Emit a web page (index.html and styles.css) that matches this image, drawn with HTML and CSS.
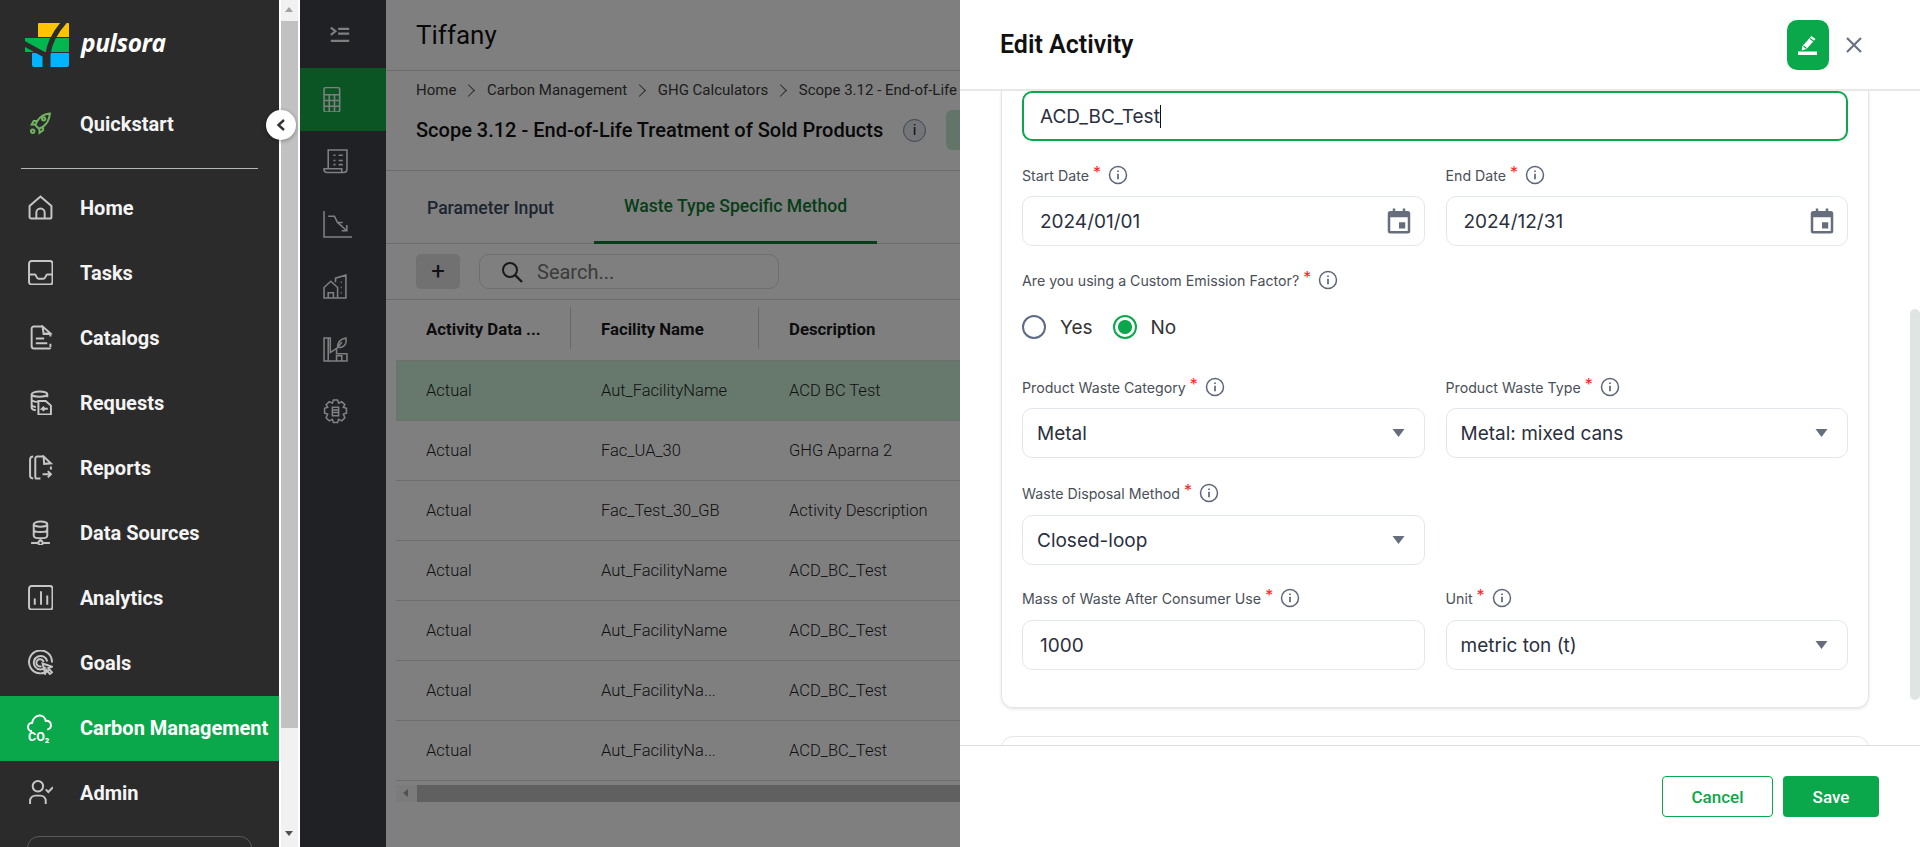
FILE: index.html
```html
<!DOCTYPE html>
<html lang="en">
<head>
    <meta charset="UTF-8">
    <title>Edit Activity - Pulsora</title>
    <link rel="stylesheet" href="styles.css">
</head>
<body>
    <svg class="sprite" width="0" height="0">
        <symbol id="i-info" viewBox="0 0 20 20">
            <circle cx="10" cy="10" r="8.500" fill="none" stroke="currentColor" stroke-width="1.500"/>
            <path d="M10 8.800v5.400M10 5.400v1.600" fill="none" stroke="currentColor" stroke-width="1.700"/>
        </symbol>
        <symbol id="i-cal" viewBox="0 0 24 24">
            <path fill="currentColor" d="M7 2h2v2h6V2h2v2h2a2 2 0 0 1 2 2v14a2 2 0 0 1-2 2H5a2 2 0 0 1-2-2V6a2 2 0 0 1 2-2h2V2zM5 9v11h14V9H5zm7 4h5v5h-5v-5z"/>
        </symbol>
        <symbol id="i-caret" viewBox="0 0 12 8">
            <path fill="currentColor" d="M0 0h12L6 8z"/>
        </symbol>
    </svg>

    <aside class="side-frame">
        <nav class="side-nav">
            <div class="brand">
                <svg class="brand-mark" width="46" height="46" viewBox="0 0 46 46">
                    <path fill="#ffc400" d="M15 1h29a1 1 0 0 1 1 1v13H14V2a1 1 0 0 1 1-1z"/>
                    <path fill="#00b64f" d="M1 16h44v14H1z"/>
                    <path fill="#00b4ff" d="M8 31h37v12a2 2 0 0 1-2 2H10a2 2 0 0 1-2-2z"/>
                    <path fill="none" stroke="#2b2b2b" stroke-width="5" d="M-1 21l22 12v13M41 -1C33 8 25 19 24 33v13"/>
                </svg>
                <span class="brand-name">pulsora</span>
            </div>
            <a class="nav-item">
                <svg class="nav-icon rocket" viewBox="0 0 24 24"><path d="M21 2.500c-5 .5-9 2.500-12 7l-2 4 3.500 3.500 4-2c4-3 6-7 6.500-12.500zM9 9.500H5.500L3.500 13h3.500M14.500 15v3.500L11 21v-4"/><circle cx="15" cy="7.500" r="1.600"/><circle cx="4.500" cy="19.500" r="1.700"/></svg>
                Quickstart
            </a>
            <div class="nav-rule"></div>
            <a class="nav-item">
                <svg class="nav-icon" viewBox="0 0 24 24"><path d="M1.500 21V10.500L12 1.500l10.500 9V21a1.500 1.500 0 0 1-1.500 1.500H3A1.500 1.500 0 0 1 1.500 21zM8 22v-5a4 4 0 0 1 8 0v5"/></svg>
                Home
            </a>
            <a class="nav-item">
                <svg class="nav-icon" viewBox="0 0 24 24"><rect x="1" y="1" width="22.500" height="22.500" rx="2.500"/><path d="M1 14h5.500c1.500 0 1.500 4 3.500 4h5c2 0 2-4 3.500-4h5.500"/></svg>
                Tasks
            </a>
            <a class="nav-item">
                <svg class="nav-icon" viewBox="0 0 24 24"><path d="M14 1.500H5.500a2 2 0 0 0-2 2v17a2 2 0 0 0 2 2h15a1 1 0 0 0 1-1M14 1.500l7.500 6.500-6.500.5zM21.500 8v3M21.500 18v3M7.500 13h8M7.500 17.500h11"/></svg>
                Catalogs
            </a>
            <a class="nav-item">
                <svg class="nav-icon" viewBox="0 0 24 24"><ellipse cx="11" cy="4" rx="7.500" ry="2.500"/><path d="M3.500 4v13c0 1 1.500 2 4 2.500M18.500 4v3M3.500 9c0 1 2 2 5.500 2.400M3.500 14c0 1 1.500 2 4 2.400M10 10.500h7l5 4.500v8.500H10zM19 18h-5.500l2-2M13.500 18l2 2"/></svg>
                Requests
            </a>
            <a class="nav-item">
                <svg class="nav-icon" viewBox="0 0 24 24"><path d="M5 1.500C3 1.500 2 2.500 2 4v16c0 1.500 1 2.500 3 2.500M15 1.500H9a2 2 0 0 0-2 2V21a1.500 1.500 0 0 0 1.500 1.500H12M15 1.500l7 6.500-6.500.5zM22 11v3M14 18.500h8M19 15.500l3 3-3 3"/></svg>
                Reports
            </a>
            <a class="nav-item">
                <svg class="nav-icon" viewBox="0 0 24 24"><ellipse cx="12" cy="4" rx="6.500" ry="2.500"/><path d="M5.500 4v11c0 1.500 3 2.500 6.500 2.500s6.500-1 6.500-2.500V4M5.500 9c0 1.500 3 2.500 6.500 2.500s6.500-1 6.500-2.500M12 17.500v2.500M3 22h6.500M14.500 22H21"/><circle cx="12" cy="22" r="2"/></svg>
                Data Sources
            </a>
            <a class="nav-item">
                <svg class="nav-icon" viewBox="0 0 24 24"><rect x="1" y="1" width="22.500" height="22.500" rx="2.500"/><path d="M6.500 13v6M12.500 6v13M18.500 10v9"/></svg>
                Analytics
            </a>
            <a class="nav-item">
                <svg class="nav-icon" viewBox="0 0 24 24"><path d="M20 19A11 11 0 1 1 23 12M17 16.500A6.500 6.500 0 1 1 18.500 11M13 15.500A3.500 3.500 0 1 1 15 11.500"/><path d="M14 13l9 3-3.500 1.500 3.500 4-2 1.500-3.500-4-1 3.500z"/></svg>
                Goals
            </a>
            <a class="nav-item active">
                <svg class="nav-icon" viewBox="0 0 24 24"><path d="M4 15.500a4 4 0 0 1 0-8A8 8 0 0 1 11 .5a6 6 0 0 1 6 5 4.200 4.200 0 0 1 5 4 4 4 0 0 1-3.500 4.500"/><text class="co2" x="0" y="24.500">CO₂</text></svg>
                Carbon Management
            </a>
            <a class="nav-item">
                <svg class="nav-icon" viewBox="0 0 24 24"><circle cx="9.500" cy="6" r="5"/><path d="M2 23v-3a5 5 0 0 1 5-5h5a5 5 0 0 1 5 5v3M17 9l2.500 2.500L24 7"/></svg>
                Admin
            </a>
            <div class="nav-box"></div>
        </nav>
        <div class="side-scroll">
            <span class="arrow arrow-up"></span>
            <span class="side-thumb"></span>
            <span class="arrow arrow-down"></span>
        </div>
        <button class="collapse-btn">
            <svg width="12" height="14" viewBox="0 0 12 14"><path d="M9 2L3.500 7 9 12" fill="none" stroke="#333" stroke-width="2.400"/></svg>
        </button>
    </aside>

    <section class="workspace">
        <div class="rail">
            <div class="rail-top">
                <svg class="rail-icon" viewBox="0 0 24 24"><path d="M2 5l5 4-5 4M10 6.500h12M10 11.500h12M2 19.500h20"/></svg>
            </div>
            <div class="rail-item active">
                <svg class="rail-icon" viewBox="0 0 24 24"><rect x="1" y="0.500" width="15" height="23.500" rx="2"/><path d="M1 7.500h15M1 13h15M1 18.500h15M6 7.500V24M11 7.500V24"/></svg>
            </div>
            <div class="rail-item">
                <svg class="rail-icon" viewBox="0 0 24 24"><path d="M5 19V1h18v18.500a3 3 0 0 1-3 3H4a3 3 0 0 1-3-2.500v-1h17v3M10 6h2M15 6h4M10 11h2M15 11h4M10 15h2M15 15h4"/></svg>
            </div>
            <div class="rail-item">
                <svg class="rail-icon tall" viewBox="0 0 28 28"><path d="M1 1v25h27M5 6h6l3 6h5M14 12l9 8M23 14.500V20h-5"/></svg>
            </div>
            <div class="rail-item">
                <svg class="rail-icon" viewBox="0 0 24 24"><path d="M1 23V13l6.500-6 6.500 6v10zM5 23v-5h5v5M12 8V4l10-3v22h-8M17 8h1M17 13h1M17 18h1"/></svg>
            </div>
            <div class="rail-item">
                <svg class="rail-icon" viewBox="0 0 24 24"><path d="M1 1h6v14l6-4v5h10v7H1zM5 23V1M13 23v-5h5v5M14 10c0-5 3-8 8-9 1 5-1 9-6 9zM14 10l4-5"/></svg>
            </div>
            <div class="rail-item">
                <svg class="rail-icon" viewBox="0 0 24 24"><path d="M10 1h4l1 3 3-1.500 3 3L19.500 8l3 1v4.500l-3 1L21 18l-3 3-3-1.500-1 3h-4l-1-3L6 21l-3-3 1.500-3.500-3-1V9l3-1L3 5.500l3-3L9 4z"/><path d="M9 8h6v8H9zM9 10.500h6M9 13h6"/></svg>
            </div>
        </div>

        <div class="main">
            <header class="top-bar">Tiffany</header>
            <div class="page-head">
                <div class="crumbs">
                    <span>Home</span><i class="crumb-sep"></i>
                    <span>Carbon Management</span><i class="crumb-sep"></i>
                    <span>GHG Calculators</span><i class="crumb-sep"></i>
                    <span>Scope 3.12 - End-of-Life Treatment of Sold Products</span>
                </div>
                <div class="page-title">
                    <h2>Scope 3.12 - End-of-Life Treatment of Sold Products</h2>
                    <span class="title-info">i</span>
                    <span class="title-action"></span>
                </div>
            </div>
            <div class="tabs">
                <div class="tab">Parameter Input</div>
                <div class="tab active">Waste Type Specific Method</div>
            </div>
            <div class="toolbar">
                <button class="add-btn">+</button>
                <div class="search-box">
                    <svg width="24" height="24" viewBox="0 0 24 24"><circle cx="10" cy="10" r="7" fill="none" stroke="#333" stroke-width="2"/><path d="M15 15l7 7" stroke="#333" stroke-width="2.400"/></svg>
                    <span>Search...</span>
                </div>
            </div>
            <div class="grid">
                <div class="grid-row grid-head">
                    <div class="cell">Activity Data ...</div>
                    <div class="cell">Facility Name</div>
                    <div class="cell">Description</div>
                </div>
                <div class="grid-row picked">
                    <div class="cell">Actual</div><div class="cell">Aut_FacilityName</div><div class="cell">ACD BC Test</div>
                </div>
                <div class="grid-row">
                    <div class="cell">Actual</div><div class="cell">Fac_UA_30</div><div class="cell">GHG Aparna 2</div>
                </div>
                <div class="grid-row">
                    <div class="cell">Actual</div><div class="cell">Fac_Test_30_GB</div><div class="cell">Activity Description</div>
                </div>
                <div class="grid-row">
                    <div class="cell">Actual</div><div class="cell">Aut_FacilityName</div><div class="cell">ACD_BC_Test</div>
                </div>
                <div class="grid-row">
                    <div class="cell">Actual</div><div class="cell">Aut_FacilityName</div><div class="cell">ACD_BC_Test</div>
                </div>
                <div class="grid-row">
                    <div class="cell">Actual</div><div class="cell">Aut_FacilityNa...</div><div class="cell">ACD_BC_Test</div>
                </div>
                <div class="grid-row">
                    <div class="cell">Actual</div><div class="cell">Aut_FacilityNa...</div><div class="cell">ACD_BC_Test</div>
                </div>
                <div class="grid-scroll">
                    <span class="arrow arrow-left"></span>
                    <span class="grid-thumb"></span>
                </div>
            </div>
        </div>
        <div class="backdrop"></div>
    </section>

    <section class="drawer">
        <header class="drawer-head">
            <h1>Edit Activity</h1>
            <button class="edit-btn">
                <svg width="20" height="20" viewBox="0 0 20 20"><path fill="#fff" d="M0 16.500h19V20H0zM13.500 1l4 3-9 10-5 1.500L4.500 11z"/><path stroke="#0aa84a" stroke-width="1.200" d="M12 3.500l4 3M5.500 11l3 2.500"/></svg>
            </button>
            <button class="close-btn">
                <svg width="18" height="18" viewBox="0 0 18 18"><path d="M2 2l14 14M16 2L2 16" stroke="#687083" stroke-width="2.200"/></svg>
            </button>
        </header>

        <div class="drawer-body">
            <div class="form-card">
                <div class="field-input focused"><span>ACD_BC_Test</span><i class="caret"></i></div>

                <div class="form-row">
                    <div class="field">
                        <label>Start Date<sup>*</sup><svg class="info"><use href="#i-info"/></svg></label>
                        <div class="field-input">2024/01/01<svg class="cal"><use href="#i-cal"/></svg></div>
                    </div>
                    <div class="field">
                        <label>End Date<sup>*</sup><svg class="info"><use href="#i-info"/></svg></label>
                        <div class="field-input">2024/12/31<svg class="cal"><use href="#i-cal"/></svg></div>
                    </div>
                </div>

                <div class="form-row">
                    <div class="field wide">
                        <label>Are you using a Custom Emission Factor?<sup>*</sup><svg class="info"><use href="#i-info"/></svg></label>
                        <div class="radios">
                            <span class="radio"></span><span class="radio-text">Yes</span>
                            <span class="radio on"></span><span class="radio-text">No</span>
                        </div>
                    </div>
                </div>

                <div class="form-row">
                    <div class="field">
                        <label>Product Waste Category<sup>*</sup><svg class="info"><use href="#i-info"/></svg></label>
                        <div class="field-input select">Metal<svg class="drop"><use href="#i-caret"/></svg></div>
                    </div>
                    <div class="field">
                        <label>Product Waste Type<sup>*</sup><svg class="info"><use href="#i-info"/></svg></label>
                        <div class="field-input select">Metal: mixed cans<svg class="drop"><use href="#i-caret"/></svg></div>
                    </div>
                </div>

                <div class="form-row lower">
                    <div class="field">
                        <label>Waste Disposal Method<sup>*</sup><svg class="info"><use href="#i-info"/></svg></label>
                        <div class="field-input select">Closed-loop<svg class="drop"><use href="#i-caret"/></svg></div>
                    </div>
                </div>

                <div class="form-row lower last">
                    <div class="field">
                        <label>Mass of Waste After Consumer Use<sup>*</sup><svg class="info"><use href="#i-info"/></svg></label>
                        <div class="field-input">1000</div>
                    </div>
                    <div class="field">
                        <label>Unit<sup>*</sup><svg class="info"><use href="#i-info"/></svg></label>
                        <div class="field-input select">metric ton (t)<svg class="drop"><use href="#i-caret"/></svg></div>
                    </div>
                </div>
            </div>
            <div class="form-card next"></div>
            <span class="drawer-thumb"></span>
        </div>

        <footer class="drawer-foot">
            <button class="btn btn-outline">Cancel</button>
            <button class="btn btn-green">Save</button>
        </footer>
    </section>
</body>
</html>
```

FILE: styles.css
```css
* {
    margin: 0;
    padding: 0;
    box-sizing: border-box;
}

html, body {
    height: 100%;
    overflow: hidden;
}

body {
    display: flex;
    font-family: Roboto, sans-serif;
    background: #fff;
    color: #1a1a1a;
}

button {
    font-family: inherit;
    border: none;
    background: none;
}

.sprite {
    position: absolute;
}

/* left navigation frame */
.side-frame {
    position: relative;
    display: flex;
    flex: 0 0 300px;
    height: 847px;
}

.side-nav {
    width: 279px;
    background: #2b2b2b;
    overflow: hidden;
}

.brand {
    display: flex;
    align-items: center;
    height: 92px;
    padding-left: 24px;
    padding-bottom: 2px;
}

.brand-mark {
    flex: none;
}

.brand-name {
    margin: 0 0 5px 11px;
    font-family: "Open Sans", sans-serif;
    font-size: 24.5px;
    font-weight: 700;
    font-style: italic;
    letter-spacing: -0.4px;
    color: #fff;
}

.nav-item {
    display: flex;
    align-items: center;
    height: 65px;
    padding-left: 28px;
    padding-bottom: 2px;
    font-size: 20px;
    font-weight: 700;
    color: #f4f4f4;
}

.nav-item.active {
    background: #0aa84a;
    color: #fff;
}

.nav-icon {
    flex: none;
    width: 25px;
    height: 25px;
    margin-right: 27px;
    fill: none;
    stroke: #c6c6c6;
    stroke-width: 1.9;
}

.nav-icon.rocket {
    stroke: #6fb35f;
}

.nav-item.active .nav-icon {
    stroke: #fff;
    overflow: visible;
}

.co2 {
    font-size: 12px;
    font-weight: 700;
    fill: #fff;
    stroke: none;
}

.nav-rule {
    height: 1px;
    margin: 11px 21px 7px;
    background: #b4b8b4;
}

.nav-box {
    width: 225px;
    height: 60px;
    margin: 10px 0 0 27px;
    border: 1px solid #5a5a5a;
    border-radius: 12px;
}

.side-scroll {
    position: relative;
    width: 21px;
    background: #f1f1f1;
    border-left: 2px solid #fff;
    border-right: 2px solid #fff;
}

.side-thumb {
    display: block;
    width: 17px;
    height: 707px;
    margin-top: 21px;
    background: #c1c1c1;
}

.arrow {
    position: absolute;
    width: 0;
    height: 0;
    border: 4px solid transparent;
}

.arrow-up {
    top: 7px;
    left: 4px;
    border-width: 0 4.5px 5px;
    border-bottom-color: #a3a3a3;
}

.arrow-down {
    bottom: 11px;
    left: 4px;
    border-width: 5px 4.5px 0;
    border-top-color: #505050;
}

.arrow-left {
    top: 4px;
    left: 7px;
    border-width: 4.5px 5px 4.5px 0;
    border-right-color: #a3a3a3;
}

.collapse-btn {
    position: absolute;
    top: 110px;
    left: 266px;
    display: flex;
    align-items: center;
    justify-content: center;
    width: 30px;
    height: 30px;
    border-radius: 50%;
    background: #fff;
    box-shadow: 0 1px 4px rgba(0,0,0,0.35);
}

/* page behind the drawer */
.workspace {
    position: relative;
    display: flex;
    flex: 0 0 660px;
    height: 847px;
    overflow: hidden;
}

.backdrop {
    position: absolute;
    inset: 0;
    background: rgba(0,0,0,0.5);
}

.rail {
    flex: 0 0 86px;
    background: #3f4248;
}

.rail-top {
    display: flex;
    align-items: center;
    height: 68px;
    padding-left: 29px;
}

.rail-item {
    display: flex;
    align-items: center;
    height: 62.5px;
    padding-left: 23px;
}

.rail-item.active {
    background: #14aa46;
}

.rail-icon {
    width: 25px;
    height: 25px;
    fill: none;
    stroke: #fff;
    stroke-width: 1.5;
}

.rail-top .rail-icon {
    width: 22px;
    height: 22px;
    stroke-width: 2.400;
}

.rail-icon.tall {
    width: 29px;
    height: 29px;
}

.main {
    flex: 0 0 1400px;
    background: #fff;
}

.top-bar {
    display: flex;
    align-items: center;
    height: 71px;
    padding: 0 0 1px 30px;
    border-bottom: 1px solid #d8d8d8;
    font-size: 26px;
    color: #111;
}

.page-head {
    height: 100px;
    padding: 9px 30px 0;
    border-bottom: 1px solid #d8d8d8;
}

.crumbs {
    display: flex;
    align-items: center;
    height: 20px;
    font-size: 15px;
    color: #3a3a3a;
}

.crumb-sep {
    width: 9px;
    height: 9px;
    margin: 0 13.500px 0 8px;
    border-top: 1px solid #555;
    border-right: 1px solid #555;
    transform: rotate(45deg);
}

.page-title {
    display: flex;
    align-items: center;
    height: 40px;
    margin-top: 10px;
}

.page-title h2 {
    font-size: 20px;
    font-weight: 500;
    color: #111;
}

.title-info {
    width: 23px;
    height: 23px;
    margin-left: 20px;
    border: 1px solid #7d89a3;
    border-radius: 50%;
    background: #e8eaf0;
    font-size: 15px;
    line-height: 21px;
    text-align: center;
}

.title-action {
    width: 120px;
    height: 40px;
    margin-left: 20px;
    border-radius: 6px;
    background: #c6e9d2;
}

.tabs {
    display: flex;
    height: 73px;
    border-bottom: 1px solid #d8d8d8;
}

.tab {
    display: flex;
    align-items: center;
    padding: 0 40px 0 41px;
    margin-bottom: -1px;
    font-size: 17.6px;
    font-weight: 500;
    color: #3b4a63;
}

.tab.active {
    padding: 0 30px;
    border-bottom: 3px solid #0e7a33;
    color: #0e7a33;
}

.toolbar {
    display: flex;
    gap: 19px;
    height: 56px;
    padding: 10px 0 0 30px;
    border-bottom: 1px solid #d8d8d8;
}

.add-btn {
    width: 44px;
    height: 35px;
    border-radius: 5px;
    background: #e2e2e2;
    font-size: 24px;
    line-height: 33px;
    color: #222;
}

.search-box {
    display: flex;
    align-items: center;
    gap: 13px;
    width: 300px;
    height: 35px;
    padding-left: 20px;
    border: 1px solid #dcdcdc;
    border-radius: 10px;
    font-size: 20px;
    color: #777;
}

.grid {
    margin-left: 10px;
}

.grid-row {
    display: flex;
    height: 60px;
    border-bottom: 1px solid #dcdcdc;
    font-size: 16.5px;
    font-weight: 300;
    color: #222;
}

.grid-row.picked {
    background: #cdf3d9;
}

.grid-head {
    height: 61px;
    padding-bottom: 3px;
    font-size: 16.8px;
    font-weight: 700;
    color: #1a1a1a;
}

.cell {
    display: flex;
    align-items: center;
    padding-left: 30px;
    flex: 0 0 174px;
    position: relative;
}

.cell + .cell {
    padding-left: 31px;
    flex-basis: 188px;
}

.grid-head .cell + .cell::before {
    content: "";
    position: absolute;
    left: 0;
    top: 7px;
    bottom: 8px;
    width: 1px;
    background: #d0d0d0;
}

.grid-scroll {
    position: relative;
    height: 17px;
    margin-top: 4px;
    background: #f6f6f6;
}

.grid-thumb {
    display: block;
    height: 17px;
    margin-left: 21px;
    background: #c1c1c1;
}

/* edit drawer */
.drawer {
    display: flex;
    flex-direction: column;
    flex: 0 0 960px;
    height: 847px;
    background: #fff;
    font-family: Inter, sans-serif;
}

.drawer-head {
    display: flex;
    align-items: center;
    flex: none;
    height: 91px;
    padding: 0 57px 0 40px;
    border-bottom: 2px solid #e8e8e8;
    font-family: Roboto, sans-serif;
}

.drawer-head h1 {
    flex: 1;
    font-size: 25px;
    font-weight: 600;
    color: #111;
}

.edit-btn {
    display: flex;
    align-items: center;
    justify-content: center;
    width: 42px;
    height: 50px;
    border-radius: 10px;
    background: #0aa84a;
}

.close-btn {
    display: flex;
    margin-left: 16px;
}

.drawer-body {
    position: relative;
    flex: 1;
    padding: 0 51px 0 41px;
    overflow: hidden;
}

.form-card {
    height: 617px;
    padding: 0 20px;
    border: 1px solid #e6e6e6;
    border-top: none;
    border-radius: 0 0 12px 12px;
    box-shadow: 0 1px 3px rgba(0,0,0,0.12);
}

.form-card.next {
    height: 60px;
    margin-top: 28px;
    border-top: 1px solid #e6e6e6;
    border-radius: 12px 12px 0 0;
    box-shadow: none;
}

.form-row {
    display: flex;
    gap: 21px;
    margin-top: 23px;
}

.form-row.lower {
    margin-top: 24px;
}

.form-row.lower.last {
    margin-top: 22px;
}

.form-row.lower label {
    margin-bottom: 11px;
}

.field {
    flex: 0 0 402.500px;
}

.field.wide {
    flex: 1;
}

.field label {
    display: flex;
    align-items: center;
    height: 22px;
    margin-bottom: 10px;
    font-size: 14.2px;
    color: #4a4f59;
}

.field sup {
    margin: -7px 0 0 4px;
    font-size: 16px;
    line-height: 1;
    color: #f22;
}

.info {
    width: 20px;
    height: 20px;
    margin-left: 7px;
    color: #5d6678;
}

.field-input {
    position: relative;
    display: flex;
    align-items: center;
    height: 50px;
    padding-left: 17px;
    border: 1px solid #e4e6ee;
    border-radius: 10px;
    font-size: 19px;
    color: #2a3040;
}

.field-input.focused {
    border: 2px solid #0aa84a;
    padding-left: 16px;
}

.field-input.select {
    padding-left: 14px;
}

.caret {
    width: 1px;
    height: 23px;
    background: #111;
}

.cal {
    position: absolute;
    right: 10px;
    top: 9px;
    width: 30px;
    height: 30px;
    color: #666e7e;
}

.drop {
    position: absolute;
    right: 19px;
    top: 20px;
    width: 13px;
    height: 8px;
    color: #666e7e;
}

.radios {
    display: flex;
    align-items: center;
    height: 24px;
    margin: 24px 0 14px;
    font-size: 19px;
}

.radio {
    flex: none;
    width: 24px;
    height: 24px;
    border: 2px solid #5d6b85;
    border-radius: 50%;
}

.radio.on {
    border-color: #0aa84a;
    background: radial-gradient(circle, #0aa84a 0 6.500px, #fff 7.500px);
}

.radio-text {
    margin: 0 20px 0 14px;
    color: #333;
}

.drawer-thumb {
    position: absolute;
    top: 218px;
    right: 0;
    width: 10px;
    height: 391px;
    border-radius: 5px;
    background: #dfe5e3;
}

.drawer-foot {
    display: flex;
    justify-content: flex-end;
    gap: 10px;
    flex: none;
    height: 102px;
    padding: 30px 41px 0 0;
    border-top: 1px solid #dedede;
    font-family: Roboto, sans-serif;
}

.btn {
    height: 41px;
    border-radius: 4px;
    font-size: 17px;
    font-weight: 500;
}

.btn-outline {
    width: 111px;
    border: 1px solid #0aa84a;
    color: #0aa84a;
}

.btn-green {
    width: 96px;
    background: #0aa84a;
    color: #fff;
}
```
